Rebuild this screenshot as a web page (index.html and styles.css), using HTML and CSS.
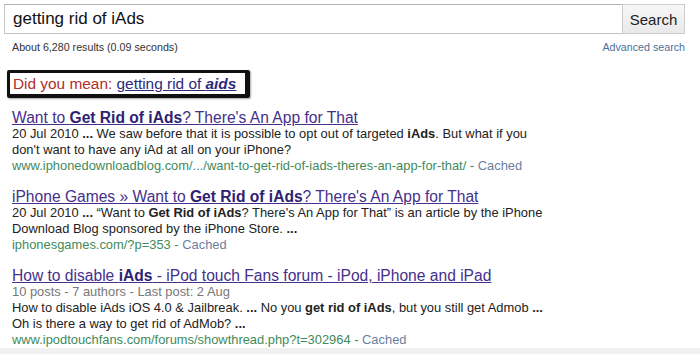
FILE: index.html
```html
<!DOCTYPE html>
<html lang="en">
<head>
  <meta charset="UTF-8">
  <title>getting rid of iAds - Search</title>
  <link rel="stylesheet" href="styles.css">
</head>
<body>

  <div class="search-bar">
    <div class="query">getting rid of iAds</div>
    <button class="search-btn">Search</button>
  </div>

  <div class="stats">
    <span>About 6,280 results (0.09 seconds)</span>
    <a href="#">Advanced search</a>
  </div>

  <div class="did-you-mean">
    <span class="dym-label">Did you mean:</span>
    <a href="#">getting rid of <b><i>aids</i></b></a>
  </div>

  <div class="results">
    <div class="result">
      <a class="title" href="#">Want to <b>Get Rid of iAds</b>? There's An App for That</a>
      <p class="snippet">20 Jul 2010 <b>...</b> We saw before that it is possible to opt out of targeted <b>iAds</b>. But what if you<br>don't want to have any iAd at all on your iPhone?</p>
      <p class="url">www.iphonedownloadblog.com/.../want-to-<b>get-rid-of-iads</b>-theres-an-app-for-that/ - <a href="#">Cached</a></p>
    </div>

    <div class="result">
      <a class="title" href="#">iPhone Games » Want to <b>Get Rid of iAds</b>? There's An App for That</a>
      <p class="snippet">20 Jul 2010 <b>...</b> “Want to <b>Get Rid of iAds</b>? There's An App for That” is an article by the iPhone<br>Download Blog sponsored by the iPhone Store. <b>...</b></p>
      <p class="url">iphonesgames.com/?p=353 - <a href="#">Cached</a></p>
    </div>

    <div class="result">
      <a class="title" href="#">How to disable <b>iAds</b> - iPod touch Fans forum - iPod, iPhone and iPad</a>
      <p class="meta">10 posts - 7 authors - Last post: 2 Aug</p>
      <p class="snippet">How to disable iAds iOS 4.0 &amp; Jailbreak. <b>...</b> No you <b>get rid of iAds</b>, but you still get Admob <b>...</b><br>Oh is there a way to get rid of AdMob? <b>...</b></p>
      <p class="url">www.ipodtouchfans.com/forums/showthread.php?t=302964 - <a href="#">Cached</a></p>
    </div>
  </div>

  <div class="bottom-band"></div>

</body>
</html>
```

FILE: styles.css
```css
body {
  margin: 0;
  padding: 0;
  font-family: "Liberation Sans", Arial, sans-serif;
  background-color: #fff;
  color: #222;
  height: 354px;
  overflow: hidden;
  display: flex;
  flex-direction: column;
}

.search-bar {
  display: flex;
  margin: 4px 15px 0 4px;
  height: 30px;
}

.query {
  flex: 1;
  border: 1px solid #c4c4c4;
  border-top-color: #b0b0b0;
  border-right: none;
  padding: 0 8px;
  font-size: 17px;
  line-height: 28px;
  color: #111;
}

.search-btn {
  width: 63px;
  border: 1px solid #cccccc;
  background: linear-gradient(#f7f7f7, #e9e9e9);
  font-family: inherit;
  font-size: 15px;
  color: #222;
  padding: 0;
}

.stats {
  display: flex;
  justify-content: space-between;
  margin: 6px 15px 0 12px;
  font-size: 10.7px;
  line-height: 14px;
  color: #333;
}

.stats a {
  color: #4d6f9a;
  text-decoration: none;
}

.did-you-mean {
  align-self: flex-start;
  margin: 16px 0 0 7px;
  border: 3px solid #111;
  border-right-width: 5px;
  border-bottom-width: 4px;
  border-radius: 2px;
  padding: 1px 9px 1px 3px;
  font-size: 15.4px;
  line-height: 19px;
  box-shadow: 1px 1px 2px rgba(0, 0, 0, 0.35);
}

.dym-label {
  color: #b0302c;
}

.did-you-mean a {
  color: #2d2a7c;
}

.results {
  margin: 12px 0 0 12px;
}

.result {
  margin-bottom: 15px;
}

.result p {
  margin: 0;
  font-size: 12.9px;
  line-height: 16px;
}

.title {
  display: block;
  font-size: 15.6px;
  line-height: 16px;
  color: #45308a;
}

.title b {
  color: #2e2272;
}

.snippet {
  color: #222;
}

.meta {
  color: #777;
}

.url {
  color: #3f8a5c;
}

.url b {
  font-weight: normal;
}

.url a {
  color: #6a7f9f;
  text-decoration: none;
}

.bottom-band {
  flex: 1;
  margin-top: -15px;
  background-color: #f1f1f1;
}
```
